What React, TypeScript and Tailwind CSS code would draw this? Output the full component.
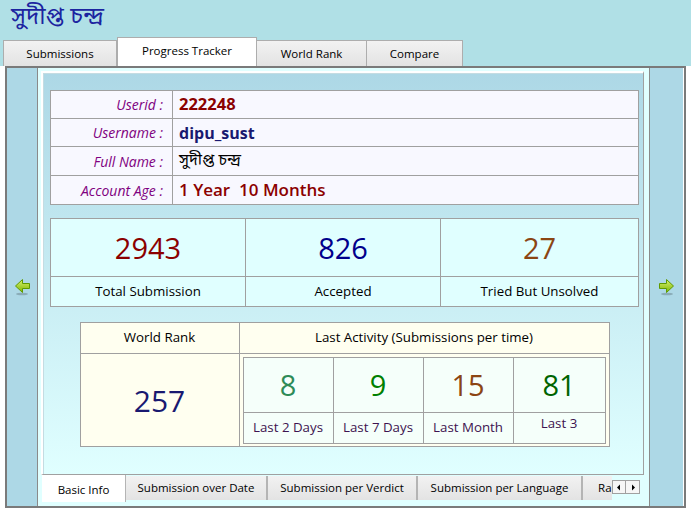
import React from "react";

const bengali = "font-['Noto_Sans_Bengali','Lohit_Bengali','Vrinda','Noto_Sans',sans-serif]";

interface InfoRow {
  label: string;
  value: string;
  valueClass: string;
  rowClass: string;
}

// row heights include the top divider (border-box)
const infoRows: InfoRow[] = [
  { label: "Userid :", value: "222248", valueClass: "font-bold text-[16.5px] text-[#8b0000]", rowClass: "h-[27px]" },
  { label: "Username :", value: "dipu_sust", valueClass: "font-bold text-[16px] text-[#191970]", rowClass: "h-[28px] border-t border-[#a0a0a0]" },
  { label: "Full Name :", value: "সুদীপ্ত চন্দ্র", valueClass: `text-[16px] text-black ${bengali}`, rowClass: "h-[29px] border-t border-[#a0a0a0]" },
  { label: "Account Age :", value: "1 Year  10 Months", valueClass: "font-semibold text-[17px] text-[#8b0000] whitespace-pre", rowClass: "h-[29px] border-t border-[#a0a0a0]" },
];

const stats = [
  { value: "2943", label: "Total Submission", color: "text-[#8b0000]", cell: "border-r border-[#a0a0a0]" },
  { value: "826", label: "Accepted", color: "text-[#00008b]", cell: "border-r border-[#a0a0a0]" },
  { value: "27", label: "Tried But Unsolved", color: "text-[#8b4513]", cell: "" },
];

const activity = [
  { value: "8", label: "Last 2 Days", color: "text-[#2e8b57]", cell: "border-r border-[#a0a0a0]", labelClass: "" },
  { value: "9", label: "Last 7 Days", color: "text-[#008000]", cell: "border-r border-[#a0a0a0]", labelClass: "" },
  { value: "15", label: "Last Month", color: "text-[#8b4513]", cell: "border-r border-[#a0a0a0]", labelClass: "" },
  { value: "81", label: "Last 3", color: "text-[#006400]", cell: "", labelClass: "pb-[9px]" },
];

const bottomTabs = [
  { name: "Submission over Date", w: "w-[142px]" },
  { name: "Submission per Verdict", w: "w-[150px]" },
  { name: "Submission per Language", w: "w-[165px]" },
  { name: "Rank History", w: "w-[100px]" },
];

function Arrow({ dir }: { dir: "left" | "right" }) {
  return (
    <svg width="18" height="18" viewBox="0 0 18 18">
      <defs>
        <linearGradient id={`arrow-${dir}`} x1="0" y1="0" x2="0" y2="1">
          <stop offset="0" stopColor="#d8f270" />
          <stop offset="1" stopColor="#7db600" />
        </linearGradient>
      </defs>
      <ellipse cx="9" cy="16" rx="6" ry="1.3" fill="#000" opacity="0.2" />
      <g transform={dir === "left" ? "translate(18 0) scale(-1 1)" : undefined}>
        <path
          d="M1.5 5.5 H8.5 V1.5 L15.5 8 L8.5 14.5 V10.5 H1.5 Z"
          fill={`url(#arrow-${dir})`}
          stroke="#5f9a00"
          strokeWidth="1"
          strokeLinejoin="round"
        />
      </g>
    </svg>
  );
}

const App: React.FC = () => {
  return (
    <div className="w-[691px] h-[511px] overflow-hidden bg-[#b0e0e6] flex flex-col font-['Open_Sans',sans-serif] text-black">
      {/* Title */}
      <div className={`h-[37px] pl-[11px] pt-[2px] text-[24px] leading-[32px] text-[#1c24a0] ${bengali}`}>
        সুদীপ্ত চন্দ্র
      </div>

      {/* Top tabs */}
      <div className="h-[29px] flex items-end pl-[3px]">
        <div className="w-[114px] h-[26px] border border-b-0 border-[#adadad] bg-gradient-to-b from-[#f2f2f2] to-[#e3e3e3] flex items-center justify-center text-[11.5px]">
          Submissions
        </div>
        <div className="w-[140px] h-[29px] border border-b-0 border-[#adadad] bg-white flex items-center justify-center text-[11.5px] pb-[3px]">
          Progress Tracker
        </div>
        <div className="w-[110px] h-[26px] border border-b-0 border-l-0 border-[#adadad] bg-gradient-to-b from-[#f2f2f2] to-[#e3e3e3] flex items-center justify-center text-[11.5px]">
          World Rank
        </div>
        <div className="w-[96px] h-[26px] border border-b-0 border-l-0 border-[#adadad] bg-gradient-to-b from-[#f2f2f2] to-[#e3e3e3] flex items-center justify-center text-[11.5px]">
          Compare
        </div>
      </div>

      {/* Tab body */}
      <div className="flex-1 bg-white px-[5px] pb-[3px]">
        <div className="h-full border-2 border-[#7a7a7a] flex">
          {/* Left nav */}
          <div className="w-[31px] border-r border-[#8a8a8a] bg-[#add8e6] flex items-center justify-center">
            <Arrow dir="left" />
          </div>

          {/* Middle */}
          <div className="w-[611px] bg-[#e0ffff] flex flex-col pt-[3px] pl-[3px] pr-[5px]">
            <div className="h-[404px] border-t-2 border-l-2 border-white border-r border-b border-r-[#a0a0a0] border-b-[#a0a0a0]">
              <div className="h-full border-t border-l border-[#c4dce2] bg-gradient-to-b from-[#add8e6] to-[#e0ffff] pt-[16px] pl-[6px] pr-[4px]">
                {/* Info table */}
                <div className="border border-[#a0a0a0] bg-[#f8f8ff]">
                  {infoRows.map((r, i) => (
                    <div key={i} className={`flex ${r.rowClass}`}>
                      <div className="w-[122px] border-r border-[#a0a0a0] flex items-center justify-end pr-[9px] italic text-[14px] text-[#800080]">
                        {r.label}
                      </div>
                      <div className={`flex-1 flex items-center pl-[6px] ${r.valueClass}`}>{r.value}</div>
                    </div>
                  ))}
                </div>

                {/* Stats */}
                <div className="mt-[13px] border border-[#a0a0a0] bg-[#e0ffff] grid grid-cols-[195px_195px_1fr]">
                  {stats.map((s, i) => (
                    <div key={i} className={`h-[57px] flex items-center justify-center text-[29px] ${s.color} ${s.cell}`}>
                      {s.value}
                    </div>
                  ))}
                  {stats.map((s, i) => (
                    <div key={i} className={`h-[30px] border-t border-[#a0a0a0] flex items-center justify-center text-[13.3px] ${s.cell}`}>
                      {s.label}
                    </div>
                  ))}
                </div>

                {/* World rank & activity */}
                <div className="mt-[15px] mx-auto w-[530px] border border-[#a0a0a0] bg-[#fffff0] grid grid-cols-[159px_1fr]">
                  <div className="h-[31px] border-r border-b border-[#a0a0a0] flex items-center justify-center text-[13.3px]">
                    World Rank
                  </div>
                  <div className="h-[31px] border-b border-[#a0a0a0] flex items-center justify-center text-[13.3px]">
                    Last Activity (Submissions per time)
                  </div>
                  <div className="h-[92px] border-r border-[#a0a0a0] flex items-center justify-center text-[30px] text-[#191970]">
                    257
                  </div>
                  <div className="h-[92px] pt-[3px] px-[3px]">
                    <div className="border border-[#a0a0a0] bg-[#f5fffa] grid grid-cols-[90px_90px_90px_1fr]">
                      {activity.map((a, i) => (
                        <div key={i} className={`h-[54px] flex items-center justify-center text-[29px] ${a.color} ${a.cell}`}>
                          {a.value}
                        </div>
                      ))}
                      {activity.map((a, i) => (
                        <div key={i} className={`h-[31px] border-t border-[#a0a0a0] flex items-center justify-center text-[13.3px] text-[#3d1450] ${a.cell} ${a.labelClass}`}>
                          {a.label}
                        </div>
                      ))}
                    </div>
                  </div>
                </div>
              </div>
            </div>

            {/* Bottom tabs */}
            <div className="h-[27px] flex">
              <div className="w-[571px] overflow-hidden flex pl-[1px]">
                <div className="w-[84px] shrink-0 h-full bg-white border-r border-[#b4b4b4] flex items-center justify-center text-[11.5px] pt-[2px]">
                  Basic Info
                </div>
                {bottomTabs.map((t) => (
                  <div
                    key={t.name}
                    className={`${t.w} shrink-0 mt-[1px] h-[24px] border-r-2 border-[#b4b4b4] bg-gradient-to-b from-[#f2f2f2] to-[#e3e3e3] flex items-center justify-center text-[11.5px] whitespace-nowrap`}
                  >
                    {t.name}
                  </div>
                ))}
              </div>
              <div className="flex pt-[5px]">
                <div className="w-[14px] h-[14px] border border-[#a0a0a0] bg-[#f6f6f6] flex items-center justify-center">
                  <svg width="6" height="7" viewBox="0 0 6 7">
                    <path d="M4 0.5 L1 3.5 L4 6.5 Z" fill="#000" />
                  </svg>
                </div>
                <div className="w-[14px] h-[14px] border border-l-0 border-[#a0a0a0] bg-[#f6f6f6] flex items-center justify-center">
                  <svg width="6" height="7" viewBox="0 0 6 7">
                    <path d="M2 0.5 L5 3.5 L2 6.5 Z" fill="#000" />
                  </svg>
                </div>
              </div>
            </div>
          </div>

          {/* Right nav */}
          <div className="w-[34px] border-l border-[#8a8a8a] bg-[#add8e6] flex items-center justify-center">
            <Arrow dir="right" />
          </div>
        </div>
      </div>
    </div>
  );
};

export default App;
